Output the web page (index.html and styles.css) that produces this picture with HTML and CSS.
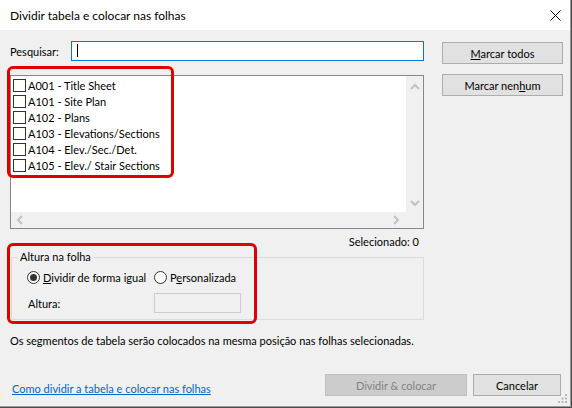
FILE: index.html
```html
<!DOCTYPE html>
<html lang="pt">
<head>
    <meta charset="UTF-8">
    <title>Dividir tabela e colocar nas folhas</title>
    <link rel="stylesheet" href="styles.css">
</head>
<body>
    <div class="window">
        <div class="titlebar">
            <span class="title">Dividir tabela e colocar nas folhas</span>
            <svg class="close" width="11" height="11" viewBox="0 0 11 11">
                <path d="M0.5 0.5 L10.5 10.5 M10.5 0.5 L0.5 10.5" stroke="#000" stroke-width="1"/>
            </svg>
        </div>

        <div class="content">
            <div class="main">
                <div class="left-col">
                    <div class="search">
                        <label class="search-label">Pesquisar:</label>
                        <div class="search-input"><span class="caret"></span></div>
                    </div>

                    <div class="list">
                        <div class="items">
                            <div class="item"><span class="box"></span>A001 - Title Sheet</div>
                            <div class="item"><span class="box"></span>A101 - Site Plan</div>
                            <div class="item"><span class="box"></span>A102 - Plans</div>
                            <div class="item"><span class="box"></span>A103 - Elevations/Sections</div>
                            <div class="item"><span class="box"></span>A104 - Elev./Sec./Det.</div>
                            <div class="item"><span class="box"></span>A105 - Elev./ Stair Sections</div>
                        </div>
                        <div class="vscroll">
                            <svg width="10" height="7" viewBox="0 0 10 7"><polyline points="1,6 5,2 9,6" fill="none" stroke="#c2c2c2" stroke-width="2"/></svg>
                            <svg width="10" height="7" viewBox="0 0 10 7"><polyline points="1,1 5,5 9,1" fill="none" stroke="#c2c2c2" stroke-width="2"/></svg>
                        </div>
                        <div class="hscroll">
                            <svg width="7" height="10" viewBox="0 0 7 10"><polyline points="6,1 2,5 6,9" fill="none" stroke="#c2c2c2" stroke-width="2"/></svg>
                            <svg width="7" height="10" viewBox="0 0 7 10"><polyline points="1,1 5,5 1,9" fill="none" stroke="#c2c2c2" stroke-width="2"/></svg>
                        </div>
                        <div class="corner"></div>
                    </div>

                    <div class="selected">Selecionado: 0</div>

                    <fieldset class="group">
                        <legend>Altura na folha</legend>
                        <div class="radios">
                            <div class="option first"><span class="radio checked"></span><span><u>D</u>ividir de forma igual</span></div>
                            <div class="option"><span class="radio"></span><span>P<u>e</u>rsonalizada</span></div>
                        </div>
                        <div class="height-row">
                            <span class="height-label">Altura:</span>
                            <div class="height-input"></div>
                        </div>
                    </fieldset>
                </div>

                <div class="right-col">
                    <button class="btn"><u>M</u>arcar todos</button>
                    <button class="btn">Marcar nen<u>h</u>um</button>
                </div>
            </div>

            <p class="note">Os segmentos de tabela serão colocados na mesma posição nas folhas selecionadas.</p>

            <div class="footer">
                <a class="help" href="#">Como dividir a tabela e colocar nas folhas</a>
                <div class="footer-buttons">
                    <button class="btn btn-split" disabled>Dividir &amp; colocar</button>
                    <button class="btn btn-cancel">Cancelar</button>
                </div>
            </div>
        </div>

        <svg class="grip" width="10" height="10" viewBox="0 0 10 10">
            <rect x="7" y="0" width="2" height="2" fill="#b8b8b8"/>
            <rect x="3.5" y="3.5" width="2" height="2" fill="#b8b8b8"/>
            <rect x="7" y="3.5" width="2" height="2" fill="#b8b8b8"/>
            <rect x="0" y="7" width="2" height="2" fill="#b8b8b8"/>
            <rect x="3.5" y="7" width="2" height="2" fill="#b8b8b8"/>
            <rect x="7" y="7" width="2" height="2" fill="#b8b8b8"/>
        </svg>

        <div class="mark mark-list"></div>
        <div class="mark mark-group"></div>
    </div>
</body>
</html>
```

FILE: styles.css
```css
body {
    margin: 0;
    background-color: #4a4a4a;
    font-family: Lato, "Liberation Sans", Arial, sans-serif;
    font-size: 11px;
    color: #000;
}
.window {
    position: relative;
    width: 570px;
    height: 406px;
    background-color: #f0f0f0;
    border-right: 1px solid #9a9a9a;
    border-bottom: 1px solid #9a9a9a;
    display: flex;
    flex-direction: column;
}
.titlebar {
    height: 30px;
    background-color: #fff;
    display: flex;
    align-items: center;
    justify-content: space-between;
    padding: 0 9px 0 10px;
    font-size: 12px;
}
.close {
    display: block;
}
.content {
    padding: 11px 7px 0 10px;
    display: flex;
    flex-direction: column;
}
.main {
    display: flex;
    gap: 18px;
}
.left-col {
    width: 414px;
}
.search {
    display: flex;
    align-items: center;
    height: 20px;
}
.search-label {
    width: 61px;
}
.search-input {
    flex: 1;
    height: 20px;
    box-sizing: border-box;
    border: 1px solid #0078d7;
    background-color: #fff;
    padding: 2px 0 0 5px;
}
.caret {
    display: block;
    width: 1px;
    height: 13px;
    background-color: #000;
}
.list {
    margin-top: 14px;
    height: 154px;
    box-sizing: border-box;
    border: 1px solid #828790;
    background-color: #fff;
    display: grid;
    grid-template-columns: 1fr 17px;
    grid-template-rows: 1fr 16px;
}
.items {
    padding: 1px 0 0 2px;
}
.item {
    height: 16px;
    display: flex;
    align-items: center;
    white-space: nowrap;
}
.box {
    width: 13px;
    height: 13px;
    box-sizing: border-box;
    border: 1px solid #333;
    background-color: #fff;
    margin-right: 2px;
}
.vscroll {
    background-color: #f0f0f0;
    display: flex;
    flex-direction: column;
    justify-content: space-between;
    align-items: center;
    padding: 7px 0 5px;
}
.hscroll {
    background-color: #f0f0f0;
    display: flex;
    justify-content: space-between;
    align-items: center;
    padding: 0 6px 0 5px;
}
.corner {
    background-color: #f0f0f0;
}
.vscroll svg, .hscroll svg {
    display: block;
}
.selected {
    margin-top: 6px;
    height: 14px;
    line-height: 14px;
    text-align: right;
    padding-right: 5px;
}
.group {
    margin: 0 0 0 1px;
    padding: 0 0 6px 6px;
    border: 1px solid #dcdcdc;
}
.group legend {
    padding: 0 2px;
    line-height: 16px;
}
.radios {
    display: flex;
    margin: 4px 0 0 9px;
    height: 16px;
    align-items: center;
    white-space: nowrap;
}
.option {
    display: flex;
    align-items: center;
}
.option.first {
    width: 127px;
}
.radio {
    width: 13px;
    height: 13px;
    box-sizing: border-box;
    border: 1px solid #333;
    border-radius: 50%;
    background-color: #fff;
    margin-right: 3px;
    display: flex;
    align-items: center;
    justify-content: center;
}
.radio.checked::after {
    content: "";
    width: 7px;
    height: 7px;
    border-radius: 50%;
    background-color: #333;
}
.height-row {
    display: flex;
    align-items: center;
    margin: 8px 0 0 10px;
}
.height-label {
    width: 126px;
}
.height-input {
    width: 87px;
    height: 20px;
    box-sizing: border-box;
    border: 1px solid #cccccc;
    background-color: #f0f0f0;
}
.right-col {
    width: 121px;
    display: flex;
    flex-direction: column;
    gap: 10px;
    padding-top: 1px;
}
.btn {
    height: 22px;
    box-sizing: border-box;
    border: 1px solid #adadad;
    background-color: #e1e1e1;
    font-family: inherit;
    font-size: 11px;
    color: #000;
    padding: 0;
}
.note {
    margin: 14px 0 0;
    line-height: 14px;
}
.footer {
    margin-top: 26px;
    display: flex;
    justify-content: space-between;
    align-items: center;
    padding-right: 2px;
}
.help {
    color: #0066cc;
    margin: 7px 0 0 2px;
}
.footer-buttons {
    display: flex;
    gap: 6px;
}
.btn-split {
    width: 142px;
    background-color: #cccccc;
    border-color: #bfbfbf;
    color: #838383;
}
.btn-cancel {
    width: 88px;
}
.grip {
    position: absolute;
    right: 2px;
    bottom: 2px;
}
.mark {
    position: absolute;
    border: 3px solid #e00000;
    border-radius: 6px;
    box-sizing: border-box;
}
.mark-list {
    left: 7px;
    top: 66px;
    width: 167px;
    height: 112px;
}
.mark-group {
    left: 7px;
    top: 243px;
    width: 250px;
    height: 81px;
}
```
